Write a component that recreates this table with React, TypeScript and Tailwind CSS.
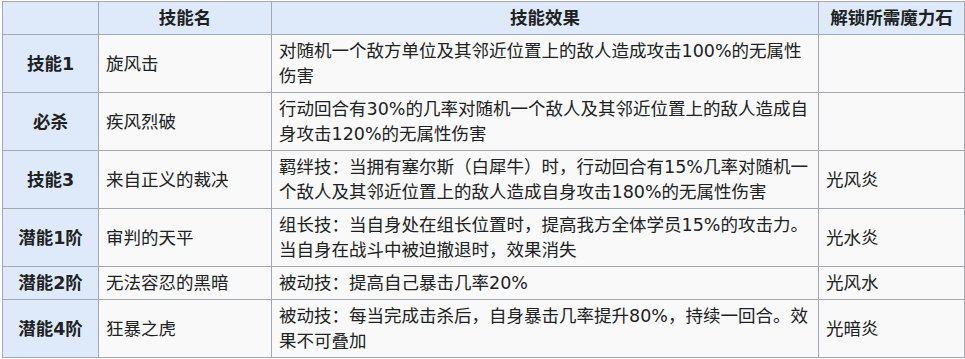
const rows = [
  { level: '技能1', name: '旋风击', effect: '对随机一个敌方单位及其邻近位置上的敌人造成攻击100%的无属性伤害', stone: '' },
  { level: '必杀', name: '疾风烈破', effect: '行动回合有30%的几率对随机一个敌人及其邻近位置上的敌人造成自身攻击120%的无属性伤害', stone: '' },
  { level: '技能3', name: '来自正义的裁决', effect: '羁绊技：当拥有塞尔斯（白犀牛）时，行动回合有15%几率对随机一个敌人及其邻近位置上的敌人造成自身攻击180%的无属性伤害', stone: '光风炎' },
  { level: '潜能1阶', name: '审判的天平', effect: '组长技：当自身处在组长位置时，提高我方全体学员15%的攻击力。当自身在战斗中被迫撤退时，效果消失', stone: '光水炎' },
  { level: '潜能2阶', name: '无法容忍的黑暗', effect: '被动技：提高自己暴击几率20%', stone: '光风水' },
  { level: '潜能4阶', name: '狂暴之虎', effect: '被动技：每当完成击杀后，自身暴击几率提升80%，持续一回合。效果不可叠加', stone: '光暗炎' },
];

const cell = 'border border-[#a2a9b1] px-[7px] pt-[4px] pb-[3px] align-middle';

export default function App() {
  return (
    <div className="bg-white w-[965px] h-[359px] pt-[1px] pl-[2px]">
      <table
        className="table-fixed border-collapse w-[962px] text-[17.5px] leading-[25px] text-[#202122]"
        style={{ fontFamily: '"DejaVu Sans", "Noto Sans CJK SC", sans-serif' }}
      >
        <colgroup>
          <col className="w-[96px]" />
          <col className="w-[173px]" />
          <col className="w-[547px]" />
          <col className="w-[146px]" />
        </colgroup>
        <thead>
          <tr className="bg-[#deeafa]">
            <th className={cell}></th>
            <th className={`${cell} text-center font-bold`}>技能名</th>
            <th className={`${cell} text-center font-bold`}>技能效果</th>
            <th className={`${cell} text-center font-bold`}>解锁所需魔力石</th>
          </tr>
        </thead>
        <tbody>
          {rows.map((r) => (
            <tr key={r.level} className="bg-[#f9f9f9]">
              <th className={`${cell} bg-[#deeafa] text-center font-bold`}>{r.level}</th>
              <td className={cell}>{r.name}</td>
              <td className={cell}>{r.effect}</td>
              <td className={cell}>{r.stone}</td>
            </tr>
          ))}
        </tbody>
      </table>
    </div>
  );
}
